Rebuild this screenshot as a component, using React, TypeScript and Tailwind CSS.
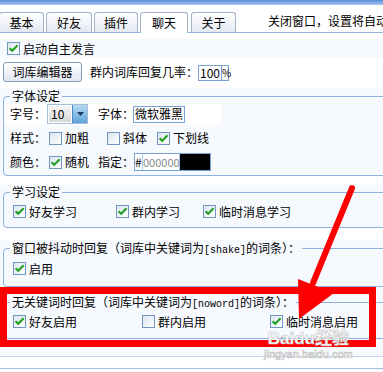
import React from "react";

const Check = ({ on }: { on?: boolean }) => (
  <span className="flex h-[13px] w-[13px] shrink-0 items-center justify-center border border-[#6f97c2] bg-gradient-to-br from-[#dde5ee] to-white">
    {on && (
      <svg width="11" height="11" viewBox="0 0 11 11">
        <path d="M1.6 5.2 L4.2 7.8 L9.6 2.2" fill="none" stroke="#22a022" strokeWidth="2.2" />
      </svg>
    )}
  </span>
);

const Item = ({ on, children, className = "" }: { on?: boolean; children: React.ReactNode; className?: string }) => (
  <span className={"flex shrink-0 items-center gap-[3px] whitespace-nowrap " + className}>
    <Check on={on} />
    <span>{children}</span>
  </span>
);

const Tab = ({ active, children, className = "" }: { active?: boolean; children: React.ReactNode; className?: string }) => (
  <div
    className={
      "flex shrink-0 items-center justify-center rounded-t-[3px] border border-b-0 border-[#a3b3c9] " +
      (active ? "mb-[-1px] h-[21px] bg-white " : "h-[20px] bg-gradient-to-b from-white to-[#e4e9f1] ") +
      className
    }
  >
    {children}
  </div>
);

const Mono = ({ children }: { children: React.ReactNode }) => (
  <span className="font-['Liberation_Mono',monospace] text-[10px] leading-[10px]">{children}</span>
);

const Group = ({ title, children, className = "" }: { title: React.ReactNode; children: React.ReactNode; className?: string }) => (
  <fieldset className={"ml-[3px] mr-[-8px] rounded-[4px] border border-[#8db2e2] " + className}>
    <legend className="ml-[6px] h-[14px] whitespace-nowrap px-[2px] leading-[14px]">{title}</legend>
    {children}
  </fieldset>
);

export default function App() {
  return (
    <div className="relative h-[372px] w-[383px] overflow-hidden bg-white font-['Noto_Sans_CJK_SC',sans-serif] text-[12px] leading-[14px] text-black">
      <div className="h-[5px] bg-gradient-to-b from-[#5a8edb] to-[#a9c6ef]" />

      {/* tabs */}
      <div className="flex h-[28px] items-end border-b border-[#93b4e0] bg-white">
        <Tab className="ml-[-1px] w-[45px]">基本</Tab>
        <Tab className="ml-[2px] w-[46px]">好友</Tab>
        <Tab className="ml-[2px] w-[44px]">插件</Tab>
        <Tab active className="ml-[2px] w-[48px]">聊天</Tab>
        <Tab className="ml-[3px] w-[45px]">关于</Tab>
        <span className="mb-[4px] ml-[32px] shrink-0 whitespace-nowrap">关闭窗口，设置将自动保存</span>
      </div>

      <div className="mt-[6px] flex h-[19px] items-center bg-[#f5f9fd] pl-[7px]">
        <Item on className="gap-[2px]">启动自主发言</Item>
      </div>

      <div className="flex h-[30px] items-start bg-white pl-[3px] pt-[4px]">
        <button className="flex h-[20px] w-[79px] shrink-0 items-center justify-center rounded-[3px] border border-[#7f9db9] bg-gradient-to-b from-white to-[#e2e8f1]">
          词库编辑器
        </button>
        <span className="ml-[8px] mt-[3px] shrink-0">群内词库回复几率：</span>
        <span className="mt-[3px] flex h-[16px] w-[24px] shrink-0 items-center border border-[#7ba3d8] bg-white pl-[1px]">100</span>
        <span className="mt-[3px] flex h-[16px] w-[7px] shrink-0 items-center border border-l-0 border-[#7ba3d8] text-[10px]">%</span>
      </div>

      {/* 字体设定 */}
      <div className="bg-[#f6f9fd] pt-[1px]">
        <Group title="字体设定" className="pb-[2px]">
          <div className="flex h-[22px] items-center">
            <div className="flex h-[21px] w-[217px] items-center bg-white pl-[6px]">
              <span className="w-[37px] shrink-0">字号：</span>
              <span className="flex h-[20px] w-[41px] shrink-0 border border-[#a9bcd6] bg-white">
                <span className="m-[1px] flex flex-1 items-center bg-gradient-to-b from-[#f4f4f4] to-[#d8d8d8] pl-[2px]">10</span>
                <span className="flex w-[15px] items-center justify-center border-l border-[#4f8cc6] bg-gradient-to-b from-[#b3dbf6] to-[#5fa3d9]">
                  <svg width="7" height="4" viewBox="0 0 7 4">
                    <path d="M0 0 H7 L3.5 4 Z" fill="#1d3b66" />
                  </svg>
                </span>
              </span>
              <span className="ml-[10px] w-[36px] shrink-0">字体：</span>
              <span className="ml-[-1px] flex h-[17px] w-[52px] shrink-0 items-center border border-[#7ba3d8] bg-white pl-[1px]">微软雅黑</span>
            </div>
          </div>
          <div className="flex h-[26px] items-center pl-[6px]">
            <span className="w-[39px] shrink-0">样式：</span>
            <Item className="w-[58px]">加粗</Item>
            <Item className="w-[50px]">斜体</Item>
            <Item on>下划线</Item>
          </div>
          <div className="flex h-[22px] items-center pl-[6px]">
            <span className="w-[39px] shrink-0">颜色：</span>
            <Item on className="w-[49px]">随机</Item>
            <span className="w-[36px] shrink-0">指定：</span>
            <span className="flex h-[18px] shrink-0 items-stretch border border-[#7ba3d8] bg-white">
              <span className="flex w-[7px] items-center">#</span>
              <span className="flex w-[38px] items-center border-x border-[#a9c6ea] text-[11px] text-[#8a8a8a]">000000</span>
              <span className="w-[30px] bg-black" />
            </span>
          </div>
        </Group>
      </div>

      {/* 学习设定 */}
      <div className="mt-[9px] bg-[#f6f9fd]">
        <Group title="学习设定" className="pb-[3px]">
          <div className="flex h-[25px] items-center pl-[9px]">
            <Item on className="w-[103px]">好友学习</Item>
            <Item on className="w-[87px]">群内学习</Item>
            <Item on>临时消息学习</Item>
          </div>
        </Group>
      </div>

      {/* shake */}
      <div className="mt-[12px] bg-[#f6f9fd] pt-[1px]">
        <Group
          title={
            <>
              窗口被抖动时回复（词库中关键词为<Mono>[shake]</Mono>的词条）：
            </>
          }
          className="pb-[4px]"
        >
          <div className="flex h-[27px] items-center pl-[9px]">
            <Item on>启用</Item>
          </div>
        </Group>
      </div>

      {/* noword */}
      <div className="bg-[#f6f9fd] pb-[17px] pt-[8px]">
        <Group
          title={
            <>
              无关键词时回复（词库中关键词为<Mono>[noword]</Mono>的词条）：
            </>
          }
          className="pb-[4px]"
        >
          <div className="flex h-[25px] items-center pl-[9px]">
            <Item on className="w-[129px]">好友启用</Item>
            <Item className="w-[128px]">群内启用</Item>
            <Item on>临时消息启用</Item>
          </div>
        </Group>
      </div>
      <div className="h-[12px] border-t border-[#c6d5ec] bg-white" />
      <div className="h-[2px] border-t border-[#a3bde4] bg-[#f6f9fd]" />

      {/* annotation */}
      <div className="absolute left-0 top-[287px] h-[60px] w-[376px] border-[7px] border-[#ff0000]" />
      <svg className="pointer-events-none absolute left-0 top-0" width="383" height="372" viewBox="0 0 383 372">
        <line x1="352" y1="188" x2="313" y2="283" stroke="#ff0000" strokeWidth="6" strokeLinecap="round" />
        <polygon points="298,279 334,293 299,319" fill="#ff0000" />
      </svg>

      {/* watermark */}
      <div className="pointer-events-none absolute left-[264px] top-[328px] flex flex-col items-center text-white [-webkit-text-stroke:0.6px_#c0c0c0]">
        <span className="font-['Liberation_Sans',sans-serif] text-[17px] font-bold leading-[18px]">
          Baidu<span className="font-['Noto_Sans_CJK_SC',sans-serif]">经验</span>
        </span>
        <span className="font-['Liberation_Sans',sans-serif] text-[11px] leading-[12px]">jingyan.baidu.com</span>
      </div>
    </div>
  );
}
